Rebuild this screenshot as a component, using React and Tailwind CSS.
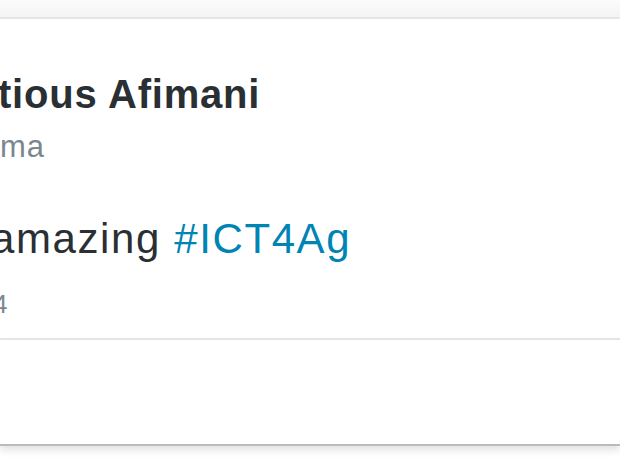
export default function App() {
  return (
    <div className="w-[620px] h-[465px] overflow-hidden bg-white font-['Liberation_Sans',Arial,sans-serif]">
      {/* strip above the card */}
      <div className="h-[19px] bg-gradient-to-b from-[#fbfbfb] to-[#f4f4f4] border-b-2 border-[#e6e6e6]" />

      {/* tweet */}
      <div className="h-[321px] border-b-2 border-[#e8e8e8] overflow-hidden">
        <div className="pt-[55px] -ml-[2px] text-[40px] leading-[40px] font-bold tracking-[0.8px] text-[#292f33] whitespace-nowrap">
          tious Afimani
        </div>
        <div className="mt-[17px] text-[31px] leading-[31px] tracking-[1px] text-[#7b868f] whitespace-nowrap">ma</div>
        <div className="mt-[56px] -ml-[9px] text-[42px] leading-[42px] tracking-[1.6px] text-[#292f33] whitespace-nowrap">
          amazing <span className="text-[#0084b4]">#ICT4Ag</span>
        </div>
        <div className="mt-[31px] -ml-[7px] text-[26px] leading-[26px] text-[#7b868f] whitespace-nowrap">4</div>
      </div>

      {/* footer */}
      <div className="h-[106px] border-b-2 border-[#bbbbbb] shadow-[0_4px_8px_rgba(0,0,0,0.12)]" />
    </div>
  );
}
